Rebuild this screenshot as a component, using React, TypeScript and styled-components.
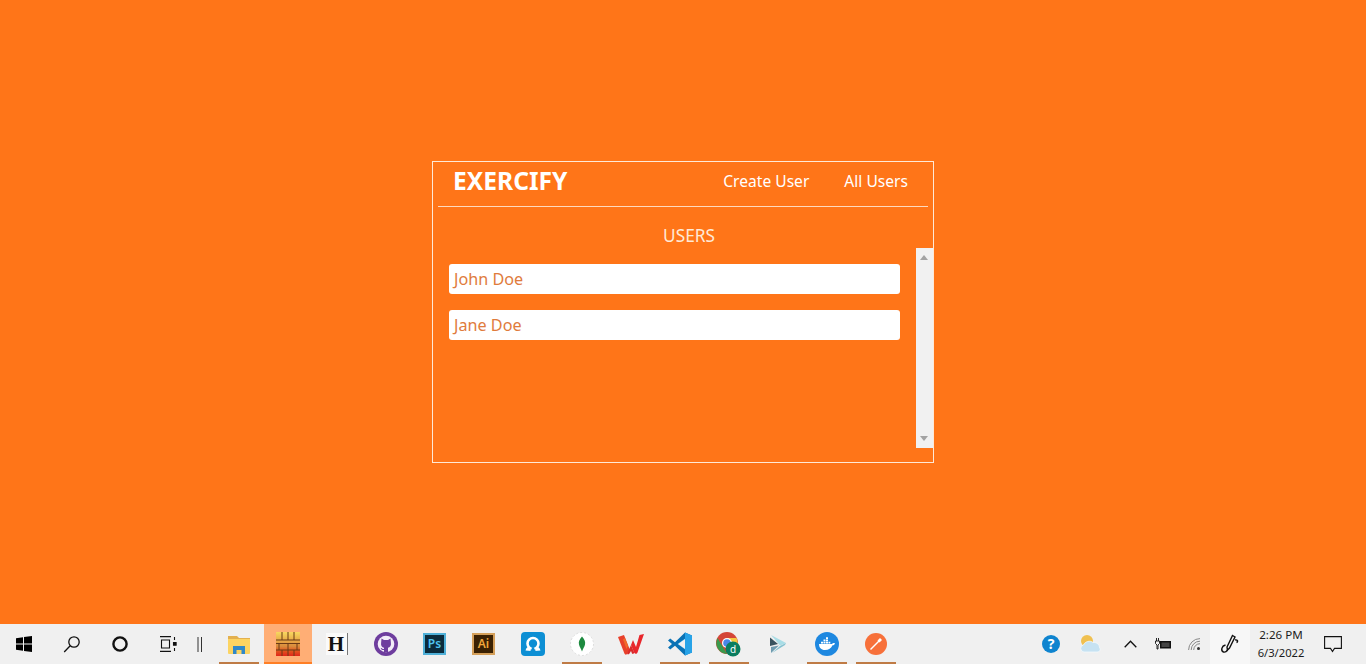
import React from "react";
import styled, { createGlobalStyle } from "styled-components";

const Global = createGlobalStyle`
  html, body { margin: 0; padding: 0; height: 100%; overflow: hidden; }
  #root { height: 100%; }
  * { box-sizing: border-box; }
`;
const Page = styled.div`
  width: 1366px; height: 664px; display: flex; flex-direction: column;
  background: #ff7518; font-family: "Noto Sans", sans-serif; color: #fff;
`;
const Main = styled.main`
  height: 624px; display: flex; align-items: center; justify-content: center;
`;
const Card = styled.section`
  width: 502px; height: 302px; border: 1px solid #ffe9d6; display: flex; flex-direction: column;
`;
const Header = styled.header`
  height: 45px; margin: 0 5px; padding: 0 20px 0 15px; border-bottom: 1px solid #ffd9bd;
  display: flex; align-items: center; justify-content: space-between;
`;
const Brand = styled.h1`
  margin: 0 0 7px; font-size: 24.6px; line-height: 32px; font-weight: 700; color: #fff;
`;
const Nav = styled.nav`
  display: flex; gap: 35px; margin-bottom: 7px;
`;
const NavLink = styled.a`
  font-size: 15.6px; line-height: 20px; color: #fff;
`;
const Title = styled.h2`
  margin: 0; padding: 16px 0 0 12px; height: 41px; display: flex; align-items: center; justify-content: center;
  font-size: 17.3px; font-weight: 400; color: #ffe9d6;
`;
const Body = styled.div`
  height: 200px; display: flex;
`;
const List = styled.ul`
  list-style: none; margin: 0; padding: 16px; flex: 1; display: flex; flex-direction: column; gap: 16px;
`;
const Row = styled.li`
  height: 30px; background: #fff; border-radius: 3px; padding: 0 5px; display: flex; align-items: center;
  font-size: 16.2px; color: #e07b3c;
`;
const Scrollbar = styled.div`
  width: 17px; background: #f1f1f1; display: flex; flex-direction: column; justify-content: space-between; align-items: center; padding: 7px 2px 7px 0;
`;
const Arrow = styled.span<{ $down?: boolean }>`
  width: 0; height: 0; border-left: 4px solid transparent; border-right: 4px solid transparent;
  ${(p) => (p.$down ? "border-top: 5px solid #a3a3a3;" : "border-bottom: 5px solid #a3a3a3;")}
`;
const Taskbar = styled.footer`
  height: 40px; background: #f0f0f0; display: flex; align-items: stretch; color: #111;
`;
const Slot = styled.div<{ $w: number; $on?: boolean; $bar?: boolean; $bg?: string; $ml?: number; $mr?: number; $pl?: number }>`
  position: relative; width: ${(p) => p.$w}px; flex: none; display: flex; align-items: center; justify-content: center;
  margin-left: ${(p) => p.$ml ?? 0}px; margin-right: ${(p) => p.$mr ?? 0}px; padding-left: ${(p) => p.$pl ?? 0}px;
  background: ${(p) => p.$bg ?? "transparent"};
  ${(p) => p.$bar && `&::after { content: ""; position: absolute; left: 5px; width: 40px; bottom: 0; height: 2px; background: #bf7b45; }`}
  ${(p) => p.$on && `&::after { content: ""; position: absolute; left: 0; right: 0; bottom: 0; height: 2px; background: #ff7f26; }`}
`;
const Spacer = styled.div`flex: 1;`;
const Clock = styled.div`
  width: 62px; flex: none; display: flex; flex-direction: column; align-items: center; justify-content: center;
  font-size: 11.6px; line-height: 18px; color: #1c1c1c; font-family: "Noto Sans", sans-serif;
`;
const ClockDate = styled.span`font-size: 11.2px;`;

const Win = () => (
  <svg width="16" height="16" viewBox="0 0 16 16"><path fill="#000" d="M0 2.2 7 1.2v6.400H0zM8 1.100 16 0v7.600H8zM0 8.500h7v6.300L0 13.800zM8 8.500h8V16l-8-1.100z"/></svg>
);
const Search = () => (
  <svg width="18" height="18" viewBox="0 0 18 18" fill="none" stroke="#111" strokeWidth="1.300"><circle cx="11" cy="7" r="5.200"/><path d="M7.200 10.800 1.200 17"/></svg>
);
const Ring = () => (
  <svg width="16" height="16" viewBox="0 0 16 16" fill="none" stroke="#111" strokeWidth="2.400"><circle cx="8" cy="8" r="6.600"/></svg>
);
const TaskView = () => (
  <svg width="17" height="16" viewBox="0 0 17 16" fill="none" stroke="#111" strokeWidth="1.100"><path d="M0 .6h11M0 15.400h11M1.500 4h8v8h-8z"/><path d="M14.500 1v3M14.500 12v3" /><path d="M13.500 6.500h2.600v2.600h-2.600z" fill="#111"/></svg>
);
const Sep = () => (
  <svg width="6" height="15" viewBox="0 0 6 15" stroke="#333" strokeWidth="1"><path d="M1 0v15M4.500 0v15"/></svg>
);
const Folder = () => (
  <svg width="22" height="19" viewBox="0 0 22 19"><path fill="#e3b04f" d="M0 1h9l2 2h11v4H0z"/><path fill="#fcd462" d="M0 4h22v14a1 1 0 0 1-1 1H1a1 1 0 0 1-1-1z"/><path fill="#2f88c9" d="M5 11h12v8h-3.500v-4h-5v4H5z"/></svg>
);
const Bricks = () => (
  <svg width="24" height="24" viewBox="0 0 24 24">
    <defs><linearGradient id="bk" x1="0" y1="0" x2="0" y2="1"><stop offset="0" stopColor="#f7d860"/><stop offset=".3" stopColor="#eab04a"/><stop offset=".6" stopColor="#d98a3c"/><stop offset=".78" stopColor="#e2561e"/><stop offset="1" stopColor="#e0261a"/></linearGradient></defs>
    <rect width="24" height="24" fill="url(#bk)"/>
    <path stroke="#6b3a16" strokeWidth="1" fill="none" d="M0 8h24M0 11.500h24M0 18h24M6 0v8M12 0v8M18 0v8M3 11.500v6.500M12 11.500v6.500M21 11.500v6.500M6 18v6M12 18v6M18 18v6"/>
  </svg>
);
const HLetter = styled.span`
  width: 22px; height: 22px; background: #fafafa; border-right: 1px solid #777; display: flex; align-items: center; justify-content: center;
  font-family: "Liberation Serif", serif; font-weight: 700; font-size: 21px; color: #111; line-height: 1;
`;
const Github = () => (
  <svg width="24" height="24" viewBox="0 0 24 24"><circle cx="12" cy="12" r="12" fill="#6e3d9e"/><circle cx="12" cy="12" r="8.300" fill="#f3ecf8"/><path fill="#6e3d9e" d="M7.500 6.500 10 8h4l2.500-1.500.4 4.500c.5 2.500-1 4.300-2.900 4.700v4.200h-4v-1.900c-1.800.4-2.700-.4-3.300-2l1.300.2c.6 1 1.200 1 2 .7v-1.200c-1.900-.4-3.400-2.200-2.900-4.700z"/></svg>
);
const AppTile = styled.span<{ $bg: string; $edge: string; $fg: string }>`
  width: 23px; height: 22px; background: ${(p) => p.$bg}; border: 2px solid ${(p) => p.$edge}; color: ${(p) => p.$fg};
  display: flex; align-items: center; justify-content: center; font-size: 12px; font-weight: 600; line-height: 1; font-family: "Noto Sans", sans-serif;
`;
const Cloud = () => (
  <svg width="24" height="24" viewBox="0 0 24 24"><rect width="24" height="24" rx="4" fill="#0d8fd4"/><circle cx="12" cy="11.500" r="5.500" fill="none" stroke="#fff" strokeWidth="2.600"/><path d="M4.500 18.500c.8-3 2.500-4 3.500-4l2 4.500zM19.500 18.500c-.8-3-2.500-4-3.500-4l-2 4.500z" fill="#fff"/><path d="M9 20h6l-3-6z" fill="#0d8fd4"/></svg>
);
const Mongo = () => (
  <svg width="24" height="24" viewBox="0 0 24 24"><circle cx="12" cy="12" r="11.500" fill="#fff" stroke="#ddd" strokeDasharray="2 2"/><path fill="#1d8a3f" d="M12 4.500c2.800 3 3.600 5.500 3 8-.5 2.500-2 4-3 7-1-3-2.500-4.500-3-7-.6-2.500.2-5 3-8z"/></svg>
);
const Wps = () => (
  <svg width="26" height="21" viewBox="0 0 26 21">
    <path fill="#e8402b" d="M0 3 6 1l6 15-3 4c-1 1-2 .8-2.600-.4z"/>
    <path fill="#d92a2a" d="M9 20l4-9 3 7c.5 1.500-1 2.500-2 1.500L13 17l-1.500 2.500c-.7 1-1.800 1-2.500.5z"/>
    <path fill="#e8262b" d="M26 0 19.500 18.500c-.6 1.600-2.600 1.600-3.300.2L13 11l2-5 3 7 3.500-12z"/>
    <path fill="#f06a2a" d="M7 4l3 8-1.500 3L5 5.500z"/>
  </svg>
);
const VSCode = () => (
  <svg width="24" height="24" viewBox="0 0 24 24"><path fill="#0a72b5" d="M0 8.500 2.200 6.500 7 10.300 17 .6 24 3.500v17L17 23.400 7 13.700l-4.800 3.800L0 15.500 4 12z"/><path fill="#27a3e8" d="M17 .6 24 3.500v17L17 23.400zM17 6.500 9.500 12l7.500 5.500z"/><path fill="#f0f0f0" d="M17 7 10 12l7 5z"/></svg>
);
const Chrome = () => (
  <svg width="25" height="25" viewBox="0 0 25 25">
    <circle cx="11" cy="11" r="11" fill="#d44638"/>
    <path fill="#3a9a4c" d="M1.500 6 7 15l4 7A11 11 0 0 1 1.500 6z"/>
    <path fill="#f5c842" d="M11 6h9.500A11 11 0 0 1 11 22l5-8z"/>
    <circle cx="11" cy="11" r="5" fill="#fff"/><circle cx="11" cy="11" r="3.800" fill="#4a86e8"/>
    <circle cx="17" cy="17" r="7.500" fill="#0a7d5f"/>
    <text x="17" y="20.500" fontSize="10" fill="#fff" textAnchor="middle" fontFamily="Noto Sans">d</text>
  </svg>
);
const Prisma = () => (
  <svg width="18" height="20" viewBox="0 0 18 20"><path fill="#a9dde6" d="M2 1l15 8-6 2.500z"/><path fill="#39535f" d="M1 3.500 9 10l-8 2z"/><path fill="#6f9cb0" d="M2 13l8-1.500L2 19z"/><path fill="#85c2d1" d="M17 9l-6 3-8 7 13-8z"/></svg>
);
const Docker = () => (
  <svg width="24" height="24" viewBox="0 0 24 24"><circle cx="12" cy="12" r="12" fill="#1e88e0"/><path fill="#fff" d="M4 12h13c.5-1 2-1.200 3-.6-.5 1.300-1.500 1.800-2.500 1.800-1.200 3-4 4.800-7.500 4.800-4 0-6-2.500-6-6z"/><path fill="#fff" d="M6 9.800h2v1.700H6zM8.500 9.800h2v1.700h-2zM11 9.800h2v1.700h-2zM13.500 9.800h1.800v1.700h-1.800zM8.500 7.500h2v1.800h-2zM11 7.500h2v1.800h-2zM11 5.300h2v1.800h-2z"/></svg>
);
const Postman = () => (
  <svg width="22" height="22" viewBox="0 0 22 22"><circle cx="11" cy="11" r="11" fill="#f7703a"/><path d="M5.500 16.500 14 8" stroke="#fff" strokeWidth="1.400"/><path d="M12.500 7.500 15 5l2 2-2.500 2.500z" fill="#fff"/></svg>
);
const Help = () => (
  <svg width="18" height="18" viewBox="0 0 18 18"><circle cx="9" cy="9" r="9" fill="#0f84cf"/><text x="9" y="14" fontSize="14" fontWeight="700" fill="#fff" textAnchor="middle" fontFamily="Noto Sans">?</text></svg>
);
const Weather = () => (
  <svg width="22" height="18" viewBox="0 0 22 18"><circle cx="8" cy="6" r="6" fill="#f0c050"/><path fill="#c6e2f2" stroke="#f4fafd" strokeWidth=".8" d="M5 17a3.600 3.600 0 0 1-.5-7.100C6 6.500 11 5 14 7.500c3.500-.5 6.500 2 6.500 5 1.500 2 .5 4.500-2.500 4.500z"/></svg>
);
const Chevron = () => (
  <svg width="13" height="8" viewBox="0 0 13 8" fill="none" stroke="#111" strokeWidth="1.300"><path d="M.7 7.300 6.500 1.200l5.800 6.100"/></svg>
);
const Battery = () => (
  <svg width="16" height="12" viewBox="0 0 16 12" fill="none"><path d="M1.500 0v3M3.500 0v3M.5 3h4v2.500L3 7v4H2V7L.5 5.500z" stroke="#111" strokeWidth=".9"/><rect x="5" y="3" width="11" height="7.500" fill="#111"/><rect x="6.500" y="4.500" width="8" height="4.500" fill="#444"/></svg>
);
const Wifi = () => (
  <svg width="13" height="13" viewBox="0 0 13 13" fill="none" stroke="#888" strokeWidth="1"><path d="M.6 12a11.400 11.400 0 0 1 11.400-11.400M3.200 12a8.800 8.800 0 0 1 8.800-8.800M5.700 12a6.300 6.300 0 0 1 6.300-6.300"/><circle cx="10.500" cy="10.500" r="1.500" fill="#333" stroke="none"/></svg>
);
const Pen = () => (
  <svg width="20" height="20" viewBox="0 0 20 20" fill="none" stroke="#111" strokeWidth="1.400"><path d="M12.500 1.500 15 3 9.500 14 7.500 16 7 13z"/><path d="M15 6c2.500-.5 3.500 1.500 1.500 2.500"/><path d="M5.500 11c-4 1-5 5.500-2 7 1.500.5 3-.5 4-2"/></svg>
);
const Bubble = () => (
  <svg width="18" height="17" viewBox="0 0 18 17" fill="none" stroke="#111" strokeWidth="1.100"><path d="M.6.600h16.800v11.800H10.500L8.500 15.500l-2-3.100H.6z"/></svg>
);

export default function App() {
  return (
    <Page>
      <Global />
      <Main>
        <Card>
          <Header>
            <Brand>EXERCIFY</Brand>
            <Nav>
              <NavLink>Create User</NavLink>
              <NavLink>All Users</NavLink>
            </Nav>
          </Header>
          <Title>USERS</Title>
          <Body>
            <List>
              <Row>John Doe</Row>
              <Row>Jane Doe</Row>
            </List>
            <Scrollbar>
              <Arrow />
              <Arrow $down />
            </Scrollbar>
          </Body>
        </Card>
      </Main>
      <Taskbar>
        <Slot $w={48}><Win /></Slot>
        <Slot $w={48}><Search /></Slot>
        <Slot $w={48}><Ring /></Slot>
        <Slot $w={48}><TaskView /></Slot>
        <Slot $w={16} $mr={6}><Sep /></Slot>
        <Slot $w={50} $bar><Folder /></Slot>
        <Slot $w={48} $on $bg="#ffae75"><Bricks /></Slot>
        <Slot $w={49}><HLetter>H</HLetter></Slot>
        <Slot $w={49}><Github /></Slot>
        <Slot $w={49}><AppTile $bg="#0b2b3c" $edge="#4fb0d8" $fg="#4fc3ee">Ps</AppTile></Slot>
        <Slot $w={49}><AppTile $bg="#3a2103" $edge="#d5a05a" $fg="#f0a73c">Ai</AppTile></Slot>
        <Slot $w={49}><Cloud /></Slot>
        <Slot $w={49} $bar><Mongo /></Slot>
        <Slot $w={49}><Wps /></Slot>
        <Slot $w={49} $bar><VSCode /></Slot>
        <Slot $w={49} $bar><Chrome /></Slot>
        <Slot $w={49}><Prisma /></Slot>
        <Slot $w={49} $bar><Docker /></Slot>
        <Slot $w={49} $bar><Postman /></Slot>
        <Spacer />
        <Slot $w={39}><Help /></Slot>
        <Slot $w={40}><Weather /></Slot>
        <Slot $w={36} $pl={4}><Chevron /></Slot>
        <Slot $w={33}><Battery /></Slot>
        <Slot $w={31}><Wifi /></Slot>
        <Slot $w={40} $bg="#f7f7f7"><Pen /></Slot>
        <Clock>
          <span>2:26 PM</span>
          <ClockDate>6/3/2022</ClockDate>
        </Clock>
        <Slot $w={42}><Bubble /></Slot>
        <Slot $w={12} />
      </Taskbar>
    </Page>
  );
}
